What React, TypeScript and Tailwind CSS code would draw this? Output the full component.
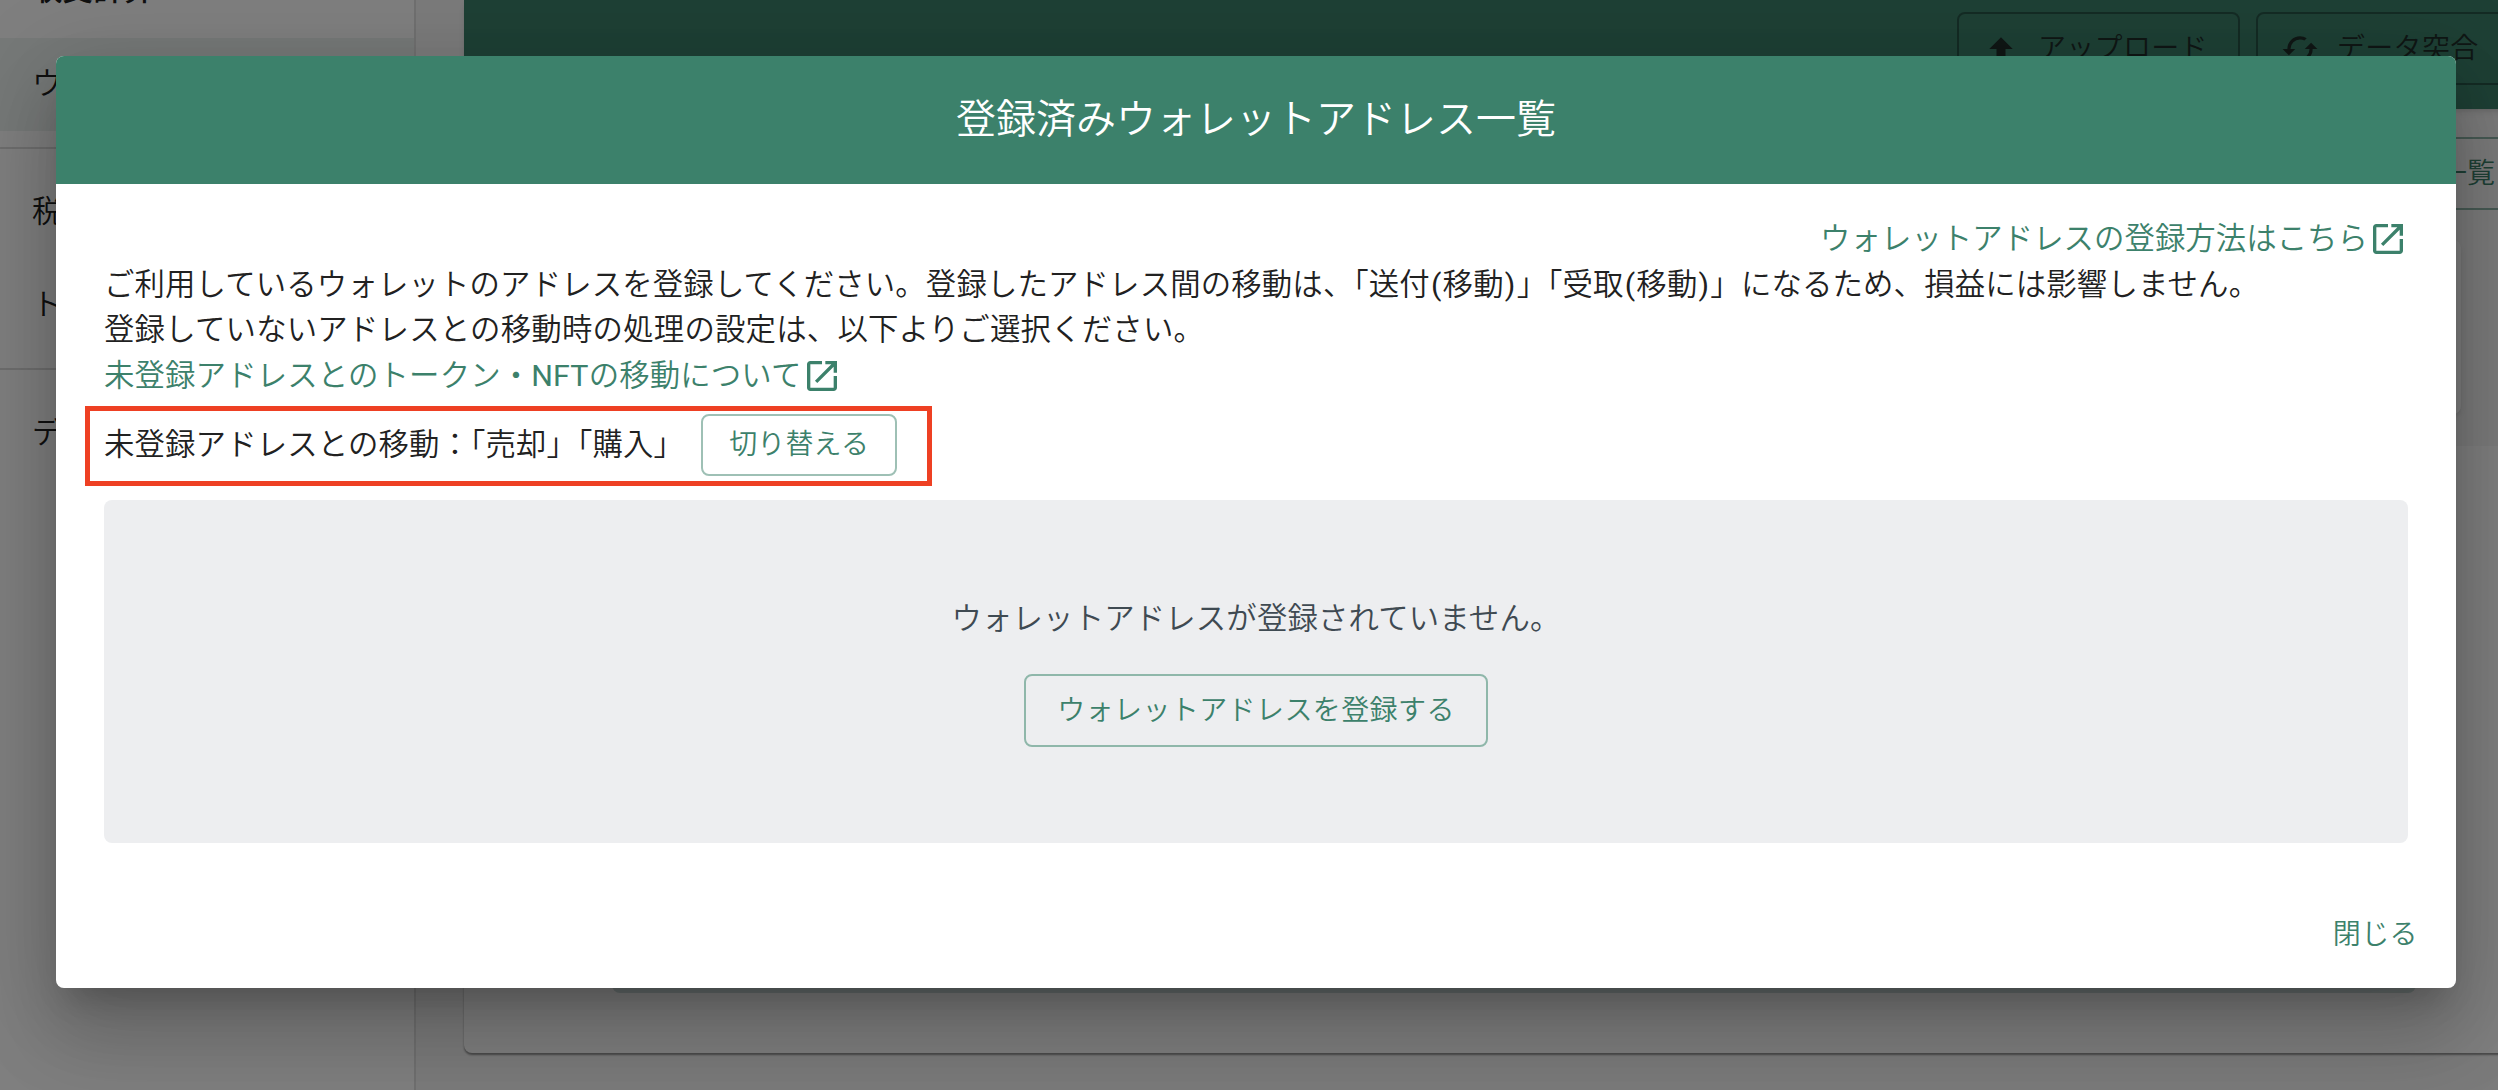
import React from "react";

const jp = "font-['Roboto','Noto_Sans_CJK_JP',sans-serif]";

function OpenIcon() {
  return (
    <svg viewBox="0 0 24 24" className="size-10 shrink-0 fill-current">
      <path d="M19 19H5V5h7V3H5c-1.11 0-2 .9-2 2v14c0 1.1.89 2 2 2h14c1.1 0 2-.9 2-2v-7h-2v7zM14 3v2h3.59l-9.83 9.83 1.41 1.41L19 6.41V10h2V3h-7z" />
    </svg>
  );
}

function UploadIcon() {
  return (
    <svg viewBox="0 0 24 24" className="size-9 shrink-0 fill-current">
      <path d="M15,20H9V12H4.16L12,4.16L19.84,12H15V20Z" />
    </svg>
  );
}

function SyncIcon() {
  return (
    <svg viewBox="0 0 24 24" className="-mx-px size-[38px] shrink-0 fill-current">
      <path d="M19,8L15,12H18A6,6 0 0,1 12,18C11,18 10.03,17.75 9.2,17.3L7.74,18.76C8.97,19.54 10.43,20 12,20A8,8 0 0,0 20,12H23M6,12A6,6 0 0,1 12,6C13,6 13.97,6.25 14.8,6.7L16.26,5.24C15.03,4.46 13.57,4 12,4A8,8 0 0,0 4,12H1L5,16L9,12" />
    </svg>
  );
}

// Parenthesised "移動" with slightly looser parentheses.
function Transfer() {
  return (
    <>
      <span className="mx-[1.1px] font-normal">(</span>移動<span className="mx-[1.1px] font-normal">)</span>
    </>
  );
}

function SideItem({ label, active, bold }: { label: string; active?: boolean; bold?: boolean }) {
  return (
    <li className={`flex h-[93.6px] items-center px-8 pb-px whitespace-nowrap ${active ? "bg-[#ecf2f0]" : ""} ${bold ? "font-medium" : ""}`}>
      {label}
    </li>
  );
}

function Sidebar() {
  return (
    <aside className="-mt-[56px] h-[1146px] w-[416px] shrink-0 border-r-2 border-[#e0e0e0] bg-white text-[30.4px] tracking-[0.2px] text-[#212121]">
      <ul className="pb-4">
        <SideItem label="収支計算" bold />
        <SideItem label="ウ" active />
      </ul>
      <ul className="border-t-2 border-[#dcdcdc] pt-4 pb-4">
        <SideItem label="税" />
        <SideItem label="ト" />
      </ul>
      <ul className="border-t-2 border-[#dcdcdc] pt-4">
        <SideItem label="デ" />
      </ul>
    </aside>
  );
}

function Backdrop() {
  return (
    <div className="flex h-full w-full overflow-hidden bg-[#f6f6f6]">
      <Sidebar />
      <main className="ml-12 flex w-[2100px] shrink-0 flex-col">
        <div className="flex h-[109px] shrink-0 items-start bg-[#3c816b] pt-3 pl-[1493px] text-[28px] tracking-[0.3px] text-[#212f2b] shadow-md">
          <div className="flex h-[73px] w-[283px] items-center gap-[19px] rounded-lg border-2 border-[#295648] pl-6 whitespace-nowrap">
            <UploadIcon />
            アップロード
          </div>
          <div className="ml-4 flex h-[73px] w-[300px] items-center gap-[19px] rounded-lg border-2 border-[#295648] pl-6 whitespace-nowrap">
            <SyncIcon />
            データ突合
          </div>
        </div>
        <div className="mt-7 ml-[1700px] flex h-[73px] shrink-0 items-center border-2 border-[#8fb5a9] pl-[273px] text-[28px] text-[#3c816b]">
          一覧
        </div>
        <div className="mt-[30px] h-[174px] w-[1997px] shrink-0 rounded-lg bg-white shadow-md" />
        <div className="mt-8 flex h-[607px] shrink-0 rounded-lg bg-white px-[148px] shadow-[0_2px_2px_rgba(0,0,0,0.4)]">
          <div className="h-[547px] w-[1833px] rounded-lg bg-[#d0e0de]" />
        </div>
      </main>
    </div>
  );
}

function Modal() {
  return (
    <section className="flex h-[932px] w-[2400px] flex-col overflow-hidden rounded-lg bg-white">
      <header className="flex h-32 shrink-0 items-center justify-center bg-[#3c816b] text-[40px] text-white">
        登録済みウォレットアドレス一覧
      </header>
      <div className="flex flex-col px-12 pt-8 text-[30.4px] leading-[45.6px] tracking-[0.15px] text-[#212121]">
        <a className="flex items-center self-end tracking-[0.05px] text-[#3c816b]">
          ウォレットアドレスの登録方法はこちら
          <OpenIcon />
        </a>
        <p className="whitespace-nowrap">
          ご利用しているウォレットのアドレスを登録してください。登録したアドレス間の移動は、「送付<Transfer />」「受取<Transfer />」になるため、損益には影響しません。
        </p>
        <p className="tracking-[0.22px]">登録していないアドレスとの移動時の処理の設定は、以下よりご選択ください。</p>
        <a className="flex items-center self-start text-[#3c816b]">
          <span>未登録アドレスとのトークン・<span className="font-normal">NFT</span>の移動について</span>
          <OpenIcon />
        </a>
        <div className="-ml-[19px] mt-2 flex h-[80px] w-[847px] items-center border-[5px] border-[#ee4023] pb-[3px] pl-3.5">
          <span>未登録アドレスとの移動：「売却」「購入」</span>
          <button className="ml-[17px] h-[62px] w-[196px] rounded-lg border-2 border-[#9ec0b5] text-[28px] text-[#3c816b]">切り替える</button>
        </div>
        <div className="mt-3.5 flex h-[343px] flex-col items-center rounded-lg bg-[#edeef0] pt-24 text-[#3f4a52]">
          <p>ウォレットアドレスが登録されていません。</p>
          <button className="mt-8 h-[73px] w-[464px] rounded-lg border-2 border-[#8fb7aa] text-[28px] tracking-[0.4px] text-[#3c816b]">ウォレットアドレスを登録する</button>
        </div>
      </div>
      <button className="mt-auto mr-[38px] mb-8 self-end text-[28px] tracking-[0.4px] text-[#3c816b]">閉じる</button>
    </section>
  );
}

export default function App() {
  return (
    <div className={`relative h-[1090px] w-[2498px] overflow-hidden font-[350] ${jp}`}>
      <Backdrop />
      <div className="absolute inset-0 bg-black/50 pt-14 pl-14">
        <div className="h-[932px] w-[2400px] rounded-lg shadow-[0_22px_30px_-14px_rgba(0,0,0,0.2),0_48px_76px_6px_rgba(0,0,0,0.14),0_18px_92px_16px_rgba(0,0,0,0.12)]">
          <Modal />
        </div>
      </div>
    </div>
  );
}
